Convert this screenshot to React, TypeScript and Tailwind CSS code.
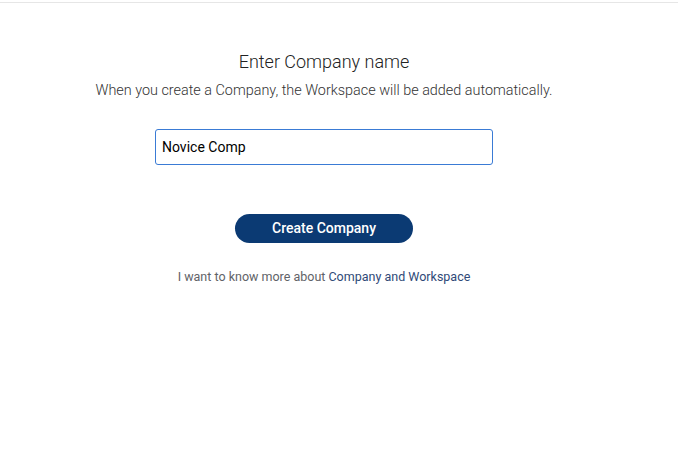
import { useState } from 'react';

export default function App() {
  const [name, setName] = useState('Novice Comp');

  return (
    <div className="min-h-[455px] bg-white font-['Roboto',sans-serif]">
      <div className="h-[2px]" />
      <div className="border-t border-[#e6e6e6]" />

      <div className="flex w-[648px] flex-col items-center pt-[48px]">
        <h1 className="text-[18px] font-light leading-[22px] text-[#222]">Enter Company name</h1>
        <p className="mt-[9px] text-[14.4px] font-light leading-[18px] text-[#333]">
          When you create a Company, the Workspace will be added automatically.
        </p>

        <input
          value={name}
          onChange={(e) => setName(e.target.value)}
          autoFocus
          className="mt-[29px] h-[36px] w-[338px] rounded-[3px] border border-[#3a7bd5] px-[6px] text-[14px] text-black caret-black outline-none"
        />

        <button className="mt-[49px] h-[29px] w-[178px] rounded-full bg-[#0b3a73] text-[14px] font-medium text-white">
          Create Company
        </button>

        <p className="mt-[26px] text-[12.5px] leading-[16px] text-[#5f6368]">
          I want to know more about <span className="text-[#2f4a78]">Company and Workspace</span>
        </p>
      </div>
    </div>
  );
}
